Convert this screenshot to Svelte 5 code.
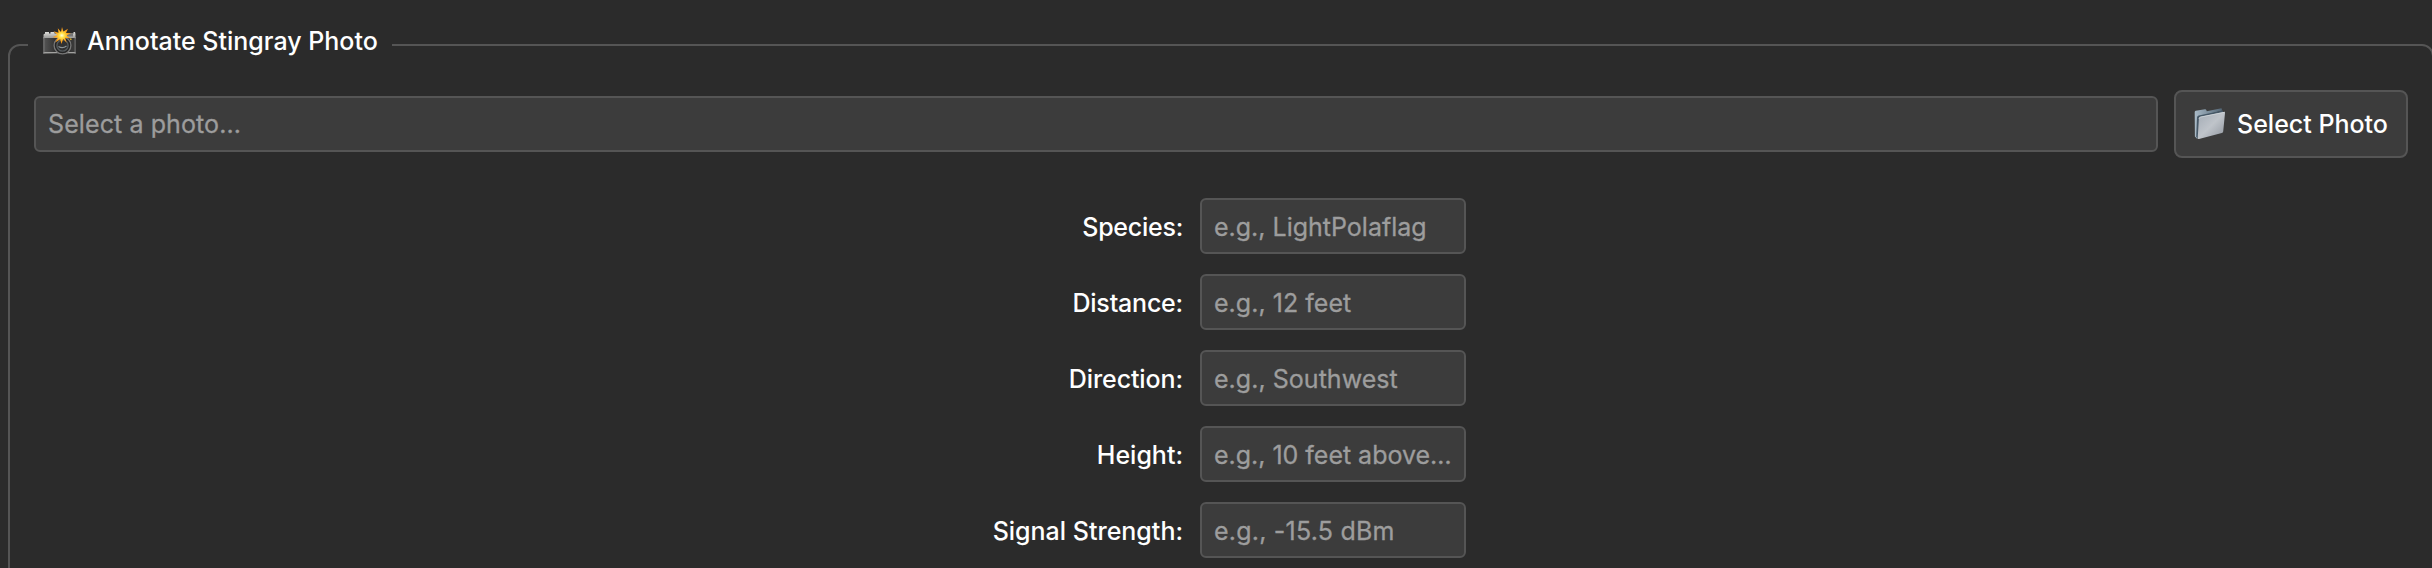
<script>
  const fields = [
    { label: 'Species:', fit: -0.25, hint: 'e.g., LightPolaflag', spacing: 0 },
    { label: 'Distance:', fit: -0.2, hint: 'e.g., 12 feet', spacing: 0.03 },
    { label: 'Direction:', fit: -0.1, hint: 'e.g., Southwest', spacing: 0.03 },
    { label: 'Height:', fit: 0, hint: 'e.g., 10 feet above…', spacing: -0.02 },
    { label: 'Signal Strength:', fit: 0, hint: 'e.g., -15.5 dBm', spacing: 0.22 }
  ];
</script>

<main>
  <section class="group">
    <header class="title">
      <svg class="camera" viewBox="0 0 33 28" aria-hidden="true">
        <defs>
          <linearGradient id="top" x1="0" y1="0" x2="0" y2="1">
            <stop offset="0" stop-color="#dededb" /><stop offset="1" stop-color="#8d8d8b" />
          </linearGradient>
          <linearGradient id="body" x1="0" y1="0" x2="1" y2="0">
            <stop offset="0" stop-color="#565656" /><stop offset=".45" stop-color="#2a2a2a" /><stop offset="1" stop-color="#3b3b3b" />
          </linearGradient>
          <radialGradient id="flash">
            <stop offset="0" stop-color="#fffce0" /><stop offset=".28" stop-color="#ffe34a" /><stop offset=".6" stop-color="#ffae20" /><stop offset="1" stop-color="#f58a0c" />
          </radialGradient>
        </defs>
        <path d="M.5 12V7.5l1.5-1V5h4v1.5h1.5V5h4v1.5h19V5H32l.5 2v5z" fill="url(#top)" />
        <path d="M.5 10.5h32V27H.5z" fill="url(#body)" />
        <path d="M.5 10.5h32M.5 25.7h32" stroke="#a2a2a0" stroke-width="1.2" />
        <path d="M.9 10v17M32.1 10v17" stroke="#888" stroke-width=".8" />
        <path d="M24 6.5h6v3h-6z" fill="#777" />
        <circle cx="19.5" cy="18.5" r="8.4" fill="#242424" stroke="#777" stroke-width="1.3" />
        <circle cx="19.5" cy="18.5" r="5.6" fill="#303030" stroke="#555a5d" stroke-width="1.4" />
        <path d="M15.5 19.5q4 2.6 8-.5" stroke="#8b9498" stroke-width="1.2" fill="none" />
        <path d="m19 0 1.4 4.5L25 1.7l-2 4.2 5 .4-4.7 2.1 3.9 3.1-5-.7 1.5 5-3.5-3.7-1.8 4.8-1.2-4.6-5 3.3 2.7-4.8-5.3-.5 4.7-2.4-3.8-3.7 5 1.5-.7-4.5 3.2 3.7z" fill="url(#flash)" />
        <path d="m28 11 .7 1.5-1 .7-.7-1.2z" fill="#f6c52f" />
      </svg>
      <span class="heading">Annotate Stingray Photo</span>
    </header>

    <div class="picker">
      <div class="box wide">Select a photo...</div>
      <button>
        <svg class="folder" viewBox="0 0 32 32" aria-hidden="true">
          <defs>
            <linearGradient id="front" x1="0" y1="0" x2="1" y2="1">
              <stop offset="0" stop-color="#a3abb5" /><stop offset=".5" stop-color="#bfc4ca" /><stop offset="1" stop-color="#8f959e" />
            </linearGradient>
            <linearGradient id="back" x1="0" y1="0" x2="1" y2="0">
              <stop offset="0" stop-color="#a9bac7" /><stop offset="1" stop-color="#526575" />
            </linearGradient>
          </defs>
          <path d="M.7 4.2q0-1.1 1-1.4L11 1.2q1-.1 1.3.7l.5 1.4L27.5.2l.7 2.3L5 9 3.3 31 .9 28.5z" fill="url(#back)" />
          <path d="M3 9.5q.1-1.7 1.7-2L29 2.5v3L5.5 10 4 30.8l-1.8-1.7z" fill="#465867" />
          <path d="M4.9 10.7q.1-1.6 1.7-1.9L29.8 4q1.3-.2 1.2 1.1l-1.8 18.3q-.1 1.3-1.4 1.6L5 31q-1.4.4-1.3-1z" fill="url(#front)" />
          <path d="M5 10.8q.1-1.5 1.7-1.8L30.8 4.2" fill="none" stroke="#d6dade" stroke-width=".8" />
        </svg>
        <span>Select Photo</span>
      </button>
    </div>

    <div class="form">
      {#each fields as f}
        <label class="row">
          <span class="name" style="letter-spacing: {f.fit}px">{f.label}</span>
          <span class="box" style="letter-spacing: {f.spacing}px">{f.hint}</span>
        </label>
      {/each}
    </div>
  </section>
</main>

<style>
  :global(body) { margin: 0; background: #2b2b2b; overflow: hidden; }
  main {
    box-sizing: border-box;
    width: 2434px;
    height: 568px;
    padding: 44px 0 0 8px;
    overflow: hidden;
    font: 25px/30px Inter, sans-serif;
    color: #fff;
  }
  .group {
    box-sizing: border-box;
    height: 600px;
    border: 2px solid #555;
    border-radius: 12px;
    padding: 0 24px;
  }
  .title {
    display: flex;
    align-items: center;
    width: 364px;
    height: 40px;
    margin: -24px 0 0 -6px;
    padding-left: 15px;
    box-sizing: border-box;
    background: #2b2b2b;
  }
  .camera { width: 33px; height: 28px; margin: -2px 11px 0 0; flex: none; }
  .heading { padding-bottom: 2px; white-space: pre; font-weight: 500; letter-spacing: 0; }
  .picker { display: flex; align-items: center; gap: 16px; margin-top: 28px; }
  .box {
    box-sizing: border-box;
    width: 266px;
    height: 56px;
    padding: 12px 0 0 12px;
    border: 2px solid #555;
    border-radius: 6px;
    background: #3c3c3c;
    color: #9d9d9d;
    white-space: pre;
    -webkit-text-stroke: 0.3px #9d9d9d;
  }
  .wide { flex: 1; padding-top: 11px; letter-spacing: 0.1px; }
  button {
    box-sizing: border-box;
    display: flex;
    align-items: center;
    gap: 11px;
    width: 234px;
    height: 68px;
    padding: 0 0 0 18px;
    border: 2px solid #555;
    border-radius: 8px;
    background: #3c3c3c;
    color: #fff;
    font: inherit;
    font-weight: 500;
    white-space: pre;
  }
  .folder { width: 32px; height: 32px; flex: none; }
  .form { display: flex; flex-direction: column; gap: 20px; margin-top: 40px; }
  .row { display: grid; grid-template-columns: 1149px 266px; column-gap: 17px; align-items: center; }
  .name { padding-top: 2px; text-align: right; font-weight: 500; }
</style>
